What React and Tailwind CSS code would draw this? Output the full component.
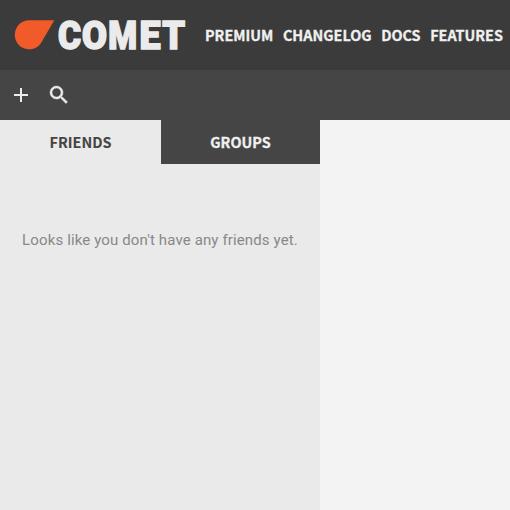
const links = ["PREMIUM", "CHANGELOG", "DOCS", "FEATURES"];

const letters = [
  { ch: "C", x: 57.9, w: 23 },
  { ch: "O", x: 82, w: 25 },
  { ch: "M", x: 108.2, w: 28.8 },
  { ch: "E", x: 139.4, w: 21 },
  { ch: "T", x: 162.2, w: 22.8 },
];

function Logo() {
  return (
    <svg className="block shrink-0" width="190" height="70" viewBox="0 0 190 70" role="img" aria-label="Comet">
      <path
        d="M29 20.2H54.3L41.5 42.3C38.8 46.7 34.4 49.3 29.5 49.3C21.2 49.3 14.8 43 14.8 35C14.8 26.8 21 20.2 29 20.2Z"
        fill="#f15a29"
      />
      <g fill="#ebebeb" stroke="#ebebeb" strokeWidth="1.6" fontFamily="Roboto, sans-serif" fontWeight="900" fontSize="39.5">
        {letters.map((l) => (
          <text key={l.ch} x={l.x} y="49" textLength={l.w} lengthAdjust="spacingAndGlyphs">
            {l.ch}
          </text>
        ))}
      </g>
    </svg>
  );
}

export default function App() {
  return (
    <div className="flex h-[510px] w-[510px] flex-col overflow-hidden bg-[#f3f3f3] font-['Noto_Sans_CJK_JP',sans-serif] text-[14.4px] font-bold text-[#f0f0f0]">
      <header className="flex h-[70px] shrink-0 items-center bg-[#3b3b3b]">
        <Logo />
        <nav className="flex gap-[9.6px] pl-[15px] leading-[20px] whitespace-nowrap [-webkit-text-stroke:0.3px]">
          {links.map((l) => (
            <a key={l}>{l}</a>
          ))}
        </nav>
      </header>
      <div className="flex h-[50px] shrink-0 items-center bg-[#454545]">
        <svg className="ml-[9px]" width="24" height="24" viewBox="0 0 24 24" fill="#ebebeb">
          <path d="M19 13h-6v6h-2v-6H5v-2h6V5h2v6h6v2z" />
        </svg>
        <svg className="ml-[14px]" width="24" height="24" viewBox="0 0 24 24" fill="#ebebeb" stroke="#ebebeb" strokeWidth="0.5">
          <path d="M15.5 14h-.79l-.28-.27A6.471 6.471 0 0 0 16 9.5 6.5 6.5 0 1 0 9.5 16c1.61 0 3.09-.59 4.23-1.57l.27.28v.79l5 4.99L20.49 19l-4.99-5zm-6 0C7.01 14 5 11.99 5 9.5S7.01 5 9.5 5 14 7.01 14 9.5 11.99 14 9.5 14z" />
        </svg>
      </div>
      <aside className="flex w-[320px] grow flex-col bg-[#eaeaea]">
        <div className="flex h-[44px] leading-[44px]">
          <button className="w-[161px] text-[#454545] [-webkit-text-stroke:0.1px]">FRIENDS</button>
          <button className="w-[159px] bg-[#454545] [-webkit-text-stroke:0.3px]">GROUPS</button>
        </div>
        <p className="pt-[66px] text-center font-[Roboto,sans-serif] text-[15px] leading-[20px] font-normal tracking-[0.13px] text-[#888888]">
          Looks like you don't have any friends yet.
        </p>
      </aside>
    </div>
  );
}
